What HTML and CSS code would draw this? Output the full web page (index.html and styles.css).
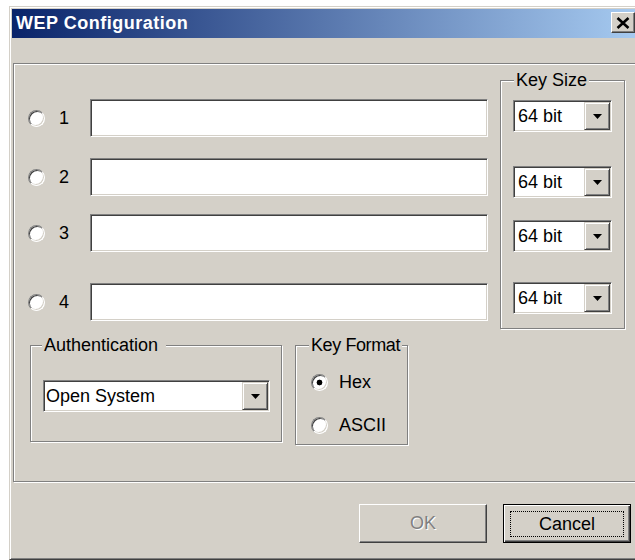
FILE: index.html
```html
<!DOCTYPE html>
<html lang="en">
<head>
<meta charset="utf-8">
<title>WEP Configuration</title>
<link rel="stylesheet" href="styles.css">
</head>
<body>
<div class="window">
  <div class="titlebar">
    <span class="title">WEP Configuration</span>
    <span class="close-btn" aria-label="Close">
      <svg width="14" height="12" viewBox="0 0 14 12"><path d="M1.5 1 L12.5 11 M12.5 1 L1.5 11" stroke="#000" stroke-width="2.6" fill="none"/></svg>
    </span>
  </div>

  <div class="client">
    <div class="panel">
      <div class="top">
        <div class="keys">
          <div class="key-row key-row--1"><span class="radio"></span><span class="key-num">1</span><input class="field" type="text"></div>
          <div class="key-row key-row--2"><span class="radio"></span><span class="key-num">2</span><input class="field" type="text"></div>
          <div class="key-row key-row--3"><span class="radio"></span><span class="key-num">3</span><input class="field" type="text"></div>
          <div class="key-row key-row--4"><span class="radio"></span><span class="key-num">4</span><input class="field" type="text"></div>
        </div>

        <fieldset class="group group--size">
          <legend>Key Size</legend>
          <div class="combo combo--size combo--k1"><span class="combo-value">64 bit</span><span class="combo-btn"><svg width="9" height="5" viewBox="0 0 9 5"><polygon points="0,0 9,0 4.5,5" fill="#000"/></svg></span></div>
          <div class="combo combo--size combo--k2"><span class="combo-value">64 bit</span><span class="combo-btn"><svg width="9" height="5" viewBox="0 0 9 5"><polygon points="0,0 9,0 4.5,5" fill="#000"/></svg></span></div>
          <div class="combo combo--size combo--k3"><span class="combo-value">64 bit</span><span class="combo-btn"><svg width="9" height="5" viewBox="0 0 9 5"><polygon points="0,0 9,0 4.5,5" fill="#000"/></svg></span></div>
          <div class="combo combo--size combo--k4"><span class="combo-value">64 bit</span><span class="combo-btn"><svg width="9" height="5" viewBox="0 0 9 5"><polygon points="0,0 9,0 4.5,5" fill="#000"/></svg></span></div>
        </fieldset>
      </div>

      <div class="bottom">
        <fieldset class="group group--auth">
          <legend>Authentication</legend>
          <div class="combo combo--auth"><span class="combo-value">Open System</span><span class="combo-btn"><svg width="9" height="5" viewBox="0 0 9 5"><polygon points="0,0 9,0 4.5,5" fill="#000"/></svg></span></div>
        </fieldset>

        <fieldset class="group group--format">
          <legend>Key Format</legend>
          <div class="opt opt--hex"><span class="radio radio--on"></span><span>Hex</span></div>
          <div class="opt opt--ascii"><span class="radio"></span><span>ASCII</span></div>
        </fieldset>
      </div>
    </div>

    <div class="actions">
      <button class="btn" type="button" disabled>OK</button>
      <button class="btn btn--default" type="button"><span class="focus">Cancel</span></button>
    </div>
  </div>
</div>
</body>
</html>
```

FILE: styles.css
```css
html, body {
  margin: 0;
  height: 100%;
  overflow: hidden;
  background: #fff;
}

body {
  font-family: "Liberation Sans", Arial, sans-serif;
  font-size: 18px;
  color: #000;
}

/* dialog frame */
.window {
  width: 625px;
  margin: 6px 0 0 9px;
  padding: 2px;
  background: #d4d0c8;
  border: 1px solid;
  border-color: #d4d0c8 #404040 #404040 #d4d0c8;
  box-shadow: inset 1px 1px #fff, inset -1px -1px #808080;
}

.titlebar {
  height: 29px;
  display: flex;
  align-items: center;
  padding: 0 2px 0 4px;
  background: linear-gradient(to right, #0a246a, #a6caf0);
}

.title {
  flex: 1;
  color: #fff;
  font-weight: bold;
  font-size: 18px;
  letter-spacing: 0.5px;
}

.close-btn {
  align-self: flex-start;
  margin-top: 3px;
  width: 24px;
  height: 21px;
  box-sizing: border-box;
  display: flex;
  align-items: center;
  justify-content: center;
  background: #d4d0c8;
  border: 1px solid;
  border-color: #fff #404040 #404040 #fff;
  box-shadow: inset -1px -1px #808080;
}

.client {
  padding: 25px 0 14px 1px;
}

/* etched container */
.panel {
  box-sizing: border-box;
  width: 623px;
  padding: 6px 0 36px 14px;
  border: 1px solid #808080;
  box-shadow: inset 1px 1px #fff, 1px 1px #fff;
}

.top {
  display: flex;
  align-items: flex-start;
  gap: 12px;
}

.keys {
  width: 460px;
}

.key-row {
  display: flex;
  align-items: center;
  height: 38px;
}
.key-row--1 { margin-top: 29px; }
.key-row--2 { margin-top: 21px; }
.key-row--3 { margin-top: 18px; }
.key-row--4 { margin-top: 31px; }

.key-num {
  width: 31px;
  margin-left: 14px;
  line-height: 20px;
}

/* radio button */
.radio {
  flex: none;
  box-sizing: border-box;
  width: 17px;
  height: 17px;
  border-radius: 50%;
  background: #fff;
  border: 1px solid;
  border-color: #808080 #fff #fff #808080;
  box-shadow: inset 1px 1px #404040, inset -1px -1px #d4d0c8;
}
.radio--on {
  background: radial-gradient(circle, #000 0 2.6px, #fff 3.2px);
}

/* sunken edit box */
.field {
  flex: 1;
  min-width: 0;
  width: auto;
  height: 38px;
  box-sizing: border-box;
  margin: 0;
  padding: 0 4px;
  font: inherit;
  background: #fff;
  border: 1px solid;
  border-color: #808080 #fff #fff #808080;
  box-shadow: inset 1px 1px #404040, inset -1px -1px #d4d0c8;
  outline: none;
}

/* group boxes: legend sits on the etched top edge */
.group {
  box-sizing: border-box;
  min-width: 0;
  margin: 0;
  padding: 0;
  border: 1px solid #808080;
  box-shadow: inset 1px 1px #fff, 1px 1px #fff;
}
.group legend {
  margin-left: 13px;
  padding: 0 2px;
  line-height: 20px;
  white-space: nowrap;
  background: #d4d0c8;
}

.group--size {
  width: 125px;
  padding-bottom: 14px;
}

.bottom {
  display: flex;
  align-items: flex-start;
  gap: 13px;
  margin: 6px 0 0 2px;
}

.group--auth {
  width: 252px;
  padding-bottom: 29px;
}
.group--auth legend {
  margin-left: 11px;
  padding-right: 8px;
}

.group--format {
  width: 113px;
  padding-bottom: 9px;
}
.group--format legend {
  letter-spacing: -0.4px;
}

.opt {
  display: flex;
  align-items: center;
  gap: 11px;
  margin-left: 15px;
  line-height: 20px;
}
.opt--hex { margin-top: 17px; }
.opt--ascii { margin-top: 23px; }

/* combo boxes */
.combo {
  display: flex;
  height: 32px;
  box-sizing: border-box;
  margin-left: 12px;
  padding: 1px;
  background: #fff;
  border: 1px solid;
  border-color: #808080 #fff #fff #808080;
  box-shadow: inset 1px 1px #404040, inset -1px -1px #d4d0c8;
}
.combo--size { width: 99px; }
.combo--k1 { margin-top: 10px; }
.combo--k2 { margin-top: 34px; }
.combo--k3 { margin-top: 22px; }
.combo--k4 { margin-top: 30px; }

.combo--auth {
  width: 227px;
  margin-top: 25px;
}

.combo-value {
  flex: 1;
  display: flex;
  align-items: center;
  padding-left: 3px;
  white-space: nowrap;
}
.combo--auth .combo-value { padding-left: 1px; }

.combo-btn {
  flex: none;
  width: 26px;
  box-sizing: border-box;
  display: flex;
  align-items: center;
  justify-content: center;
  background: #d4d0c8;
  border: 1px solid;
  border-color: #d4d0c8 #404040 #404040 #d4d0c8;
  box-shadow: inset 1px 1px #fff, inset -1px -1px #808080;
}

/* push buttons */
.actions {
  display: flex;
  justify-content: flex-end;
  gap: 16px;
  margin-top: 22px;
  padding-right: 6px;
}

.btn {
  width: 128px;
  height: 39px;
  box-sizing: border-box;
  padding: 0;
  font: inherit;
  color: #000;
  background: #d4d0c8;
  border: 1px solid;
  border-color: #fff #404040 #404040 #fff;
  box-shadow: inset -1px -1px #808080;
}
.btn:disabled {
  color: #808080;
  text-shadow: 1px 1px #fff;
}

.btn--default {
  display: flex;
  padding: 6px 6px 5px 6px;
  border: 1px solid #000;
  box-shadow: inset 1px 1px #fff, inset -1px -1px #404040, inset -2px -2px #808080;
}

.focus {
  flex: 1;
  display: flex;
  align-items: center;
  justify-content: center;
  border: 1px dotted #000;
}
```
